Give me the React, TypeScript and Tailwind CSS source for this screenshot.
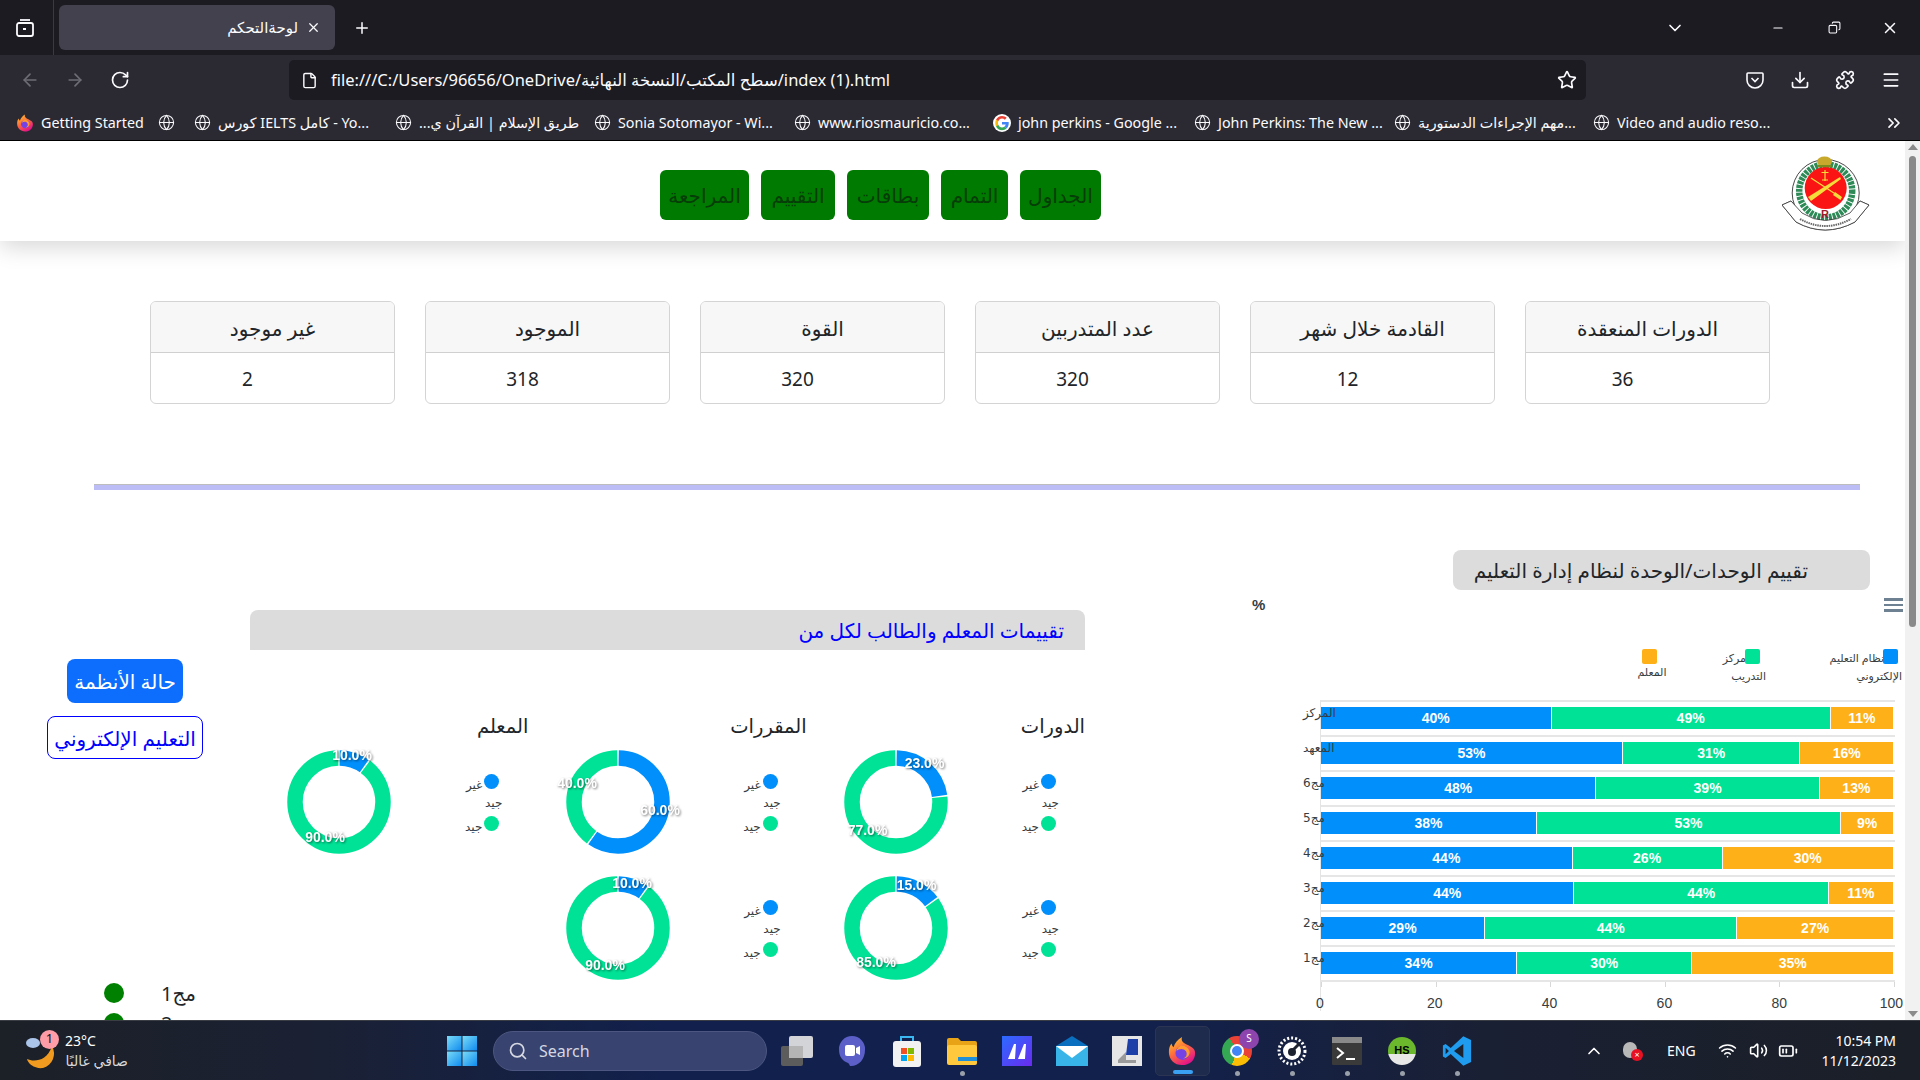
import React from "react";
import { ArrowLeft, ArrowRight, RotateCw, File, Star, Download, Puzzle, Menu, ChevronDown, Minus, Copy, X, Plus, ChevronsRight, Globe, Search, ChevronUp, Wifi, Volume2, BatteryMedium } from "lucide-react";

const B = "#008ffb", G = "#00e396", O = "#feb019";

function FirefoxIcon({ s = 18 }: { s?: number }) {
  return (
    <svg width={s} height={s} viewBox="0 0 32 32">
      <defs>
        <linearGradient id="ff" x1="0" y1="0" x2="0.6" y2="1"><stop offset="0" stopColor="#ffd52e" /><stop offset="0.5" stopColor="#ff7139" /><stop offset="1" stopColor="#e31587" /></linearGradient>
      </defs>
      <path d="M16 31C8 31 2 25 2 17c0-4 1-7 3-9 0 2 1 3 2 4 1-4 4-8 9-11-1 3 0 5 3 7 5 3 11 4 11 10 0 8-6 13-14 13z" fill="url(#ff)" />
      <circle cx="16.500" cy="18" r="7.500" fill="#7542e5" />
      <path d="M10 16c3-3 8-3 10 0 2 3 1 7-3 8 5 0 8-4 7-8-1-3-4-6-8-6-3 0-5 3-6 6z" fill="#ff9a2e" />
    </svg>
  );
}

function GoogleG() {
  return (
    <svg width="18" height="18" viewBox="0 0 48 48">
      <circle cx="24" cy="24" r="24" fill="#fff" />
      <path fill="#ea4335" d="M24 12c3 0 5.500 1 7.500 3l5-5C33 7 29 5 24 5 17 5 11 9 8 15l6 4.500C15.500 15 19.500 12 24 12z" />
      <path fill="#4285f4" d="M42 24.500c0-1.300-.1-2.500-.4-3.500H24v7h10c-.5 2.500-2 4.500-4 6l6 4.700c3.700-3.400 6-8.400 6-14.200z" />
      <path fill="#fbbc05" d="M14 28.500c-.5-1.300-.7-2.900-.7-4.500s.2-3.200.7-4.500L8 15c-1.300 2.700-2 5.800-2 9s.7 6.300 2 9z" />
      <path fill="#34a853" d="M24 43c5 0 9-1.600 12-4.300l-6-4.700c-1.600 1.100-3.600 1.800-6 1.800-4.500 0-8.500-3-10-7.300L8 33c3 6 9 10 16 10z" />
    </svg>
  );
}

const bookmarks: { icon: "ff" | "g" | "w"; text: string; cls: string; rtl?: boolean }[] = [
  { icon: "ff", text: "Getting Started", cls: "w-[142px]" },
  { icon: "w", text: "", cls: "w-[36px]" },
  { icon: "w", text: "كورس IELTS كامل - Yo...", cls: "w-[201px]" },
  { icon: "w", text: "طريق الإسلام | القرآن ي...", cls: "w-[199px]", rtl: true },
  { icon: "w", text: "Sonia Sotomayor - Wi...", cls: "w-[200px]" },
  { icon: "w", text: "www.riosmauricio.co...", cls: "w-[199px]" },
  { icon: "g", text: "john perkins - Google ...", cls: "w-[201px]" },
  { icon: "w", text: "John Perkins: The New ...", cls: "w-[200px]" },
  { icon: "w", text: "مهم الإجراءات الدستورية...", cls: "w-[199px]" },
  { icon: "w", text: "Video and audio reso...", cls: "w-[270px]" },
];

function BrowserChrome() {
  return (
    <div className="font-['Noto_Sans','DejaVu_Sans',sans-serif] text-[#fbfbfe]">
      <div className="flex h-[55px] items-center bg-[#1c1b22]">
        <div className="flex h-full w-[54px] items-center justify-center border-r border-[#3a3a42] pr-[4px]">
          <svg width="20" height="20" viewBox="0 0 20 20" fill="none" stroke="#fbfbfe" strokeWidth="1.800"><rect x="2" y="5" width="16" height="13" rx="2" /><path d="M5 2h10" /><rect x="8" y="10" width="3" height="2" fill="#fbfbfe" stroke="none" /></svg>
        </div>
        <div className="ml-[5px] flex h-[45px] w-[276px] items-center justify-end rounded-[6px] bg-[#42414d] pr-[14px]">
          <span dir="rtl" className="text-[15px]">لوحةالتحكم</span>
          <X size={15} className="ml-[8px]" />
        </div>
        <Plus size={18} className="ml-[18px]" />
        <ChevronDown size={20} className="ml-[1294px]" />
        <Minus size={14} className="ml-[86px]" />
        <Copy size={13} className="ml-[43px] -scale-x-100" />
        <X size={18} className="ml-[40px]" />
      </div>
      <div className="flex h-[50px] items-center bg-[#2b2a33]">
        <ArrowLeft size={20} className="ml-[20px] text-[#6e6d76]" />
        <ArrowRight size={20} className="ml-[25px] text-[#6e6d76]" />
        <RotateCw size={20} className="ml-[25px]" />
        <div className="ml-[159px] flex h-[40px] w-[1297px] items-center rounded-[5px] bg-[#1c1b22] pl-[12px]">
          <File size={17} />
          <span className="ml-[13px] text-[16.500px]">file:///C:/Users/96656/OneDrive/سطح المكتب/النسخة النهائية/index (1).html</span>
          <Star size={20} className="ml-auto mr-[9px]" />
        </div>
        <svg width="20" height="20" viewBox="0 0 20 20" fill="none" stroke="#fbfbfe" strokeWidth="1.600" className="ml-[159px]"><path d="M3 3h14a1 1 0 0 1 1 1v6a8 8 0 0 1-16 0V4a1 1 0 0 1 1-1z" /><path d="M6.500 8l3.500 3.500L13.500 8" /></svg>
        <Download size={20} className="ml-[25px]" />
        <Puzzle size={20} className="ml-[25px]" />
        <Menu size={20} className="ml-[26px]" />
      </div>
      <div className="flex h-[36px] items-center border-b border-black bg-[#2b2a33] pl-[16px] text-[14.300px]">
        {bookmarks.map((b, i) => (
          <div key={i} className={`flex shrink-0 items-center whitespace-nowrap ${b.cls}`}>
            {b.icon === "ff" ? <FirefoxIcon s={18} /> : b.icon === "g" ? <GoogleG /> : <Globe size={17} strokeWidth={1.500} />}
            {b.text && <span dir={b.rtl ? "rtl" : "ltr"} className="ml-[7px]">{b.text}</span>}
          </div>
        ))}
        <ChevronsRight size={20} className="ml-[21px]" />
      </div>
    </div>
  );
}

function Logo() {
  return (
    <svg width="90" height="78" viewBox="0 0 90 78">
      <path d="M0 49 L9 45 L20 57 Q43 72 68 57 L78 45 L87 49 L73 66 Q43 82 14 66 Z" fill="#fff" stroke="#333" strokeWidth="0.800" />
      <circle cx="43.700" cy="37" r="33.500" fill="#fff" stroke="#333" strokeWidth="0.900" />
      <circle cx="43.700" cy="35" r="26.500" fill="none" stroke="#2e8b57" strokeWidth="6.500" strokeDasharray="3 0.900" />
      <path d="M0 49 L9 45 L20 57 Q43 72 68 57 L78 45 L87 49 L73 66 Q43 82 14 66 Z" fill="#fff" stroke="#333" strokeWidth="0.800" />
      <path d="M18 63 Q43 77 69 63" fill="none" stroke="#666" strokeWidth="2" strokeDasharray="1.500 0.800" />
      <circle cx="43.700" cy="32" r="21" fill="#fb1414" />
      <path d="M26 41 L29 45 L59 23 L58 21 Z" fill="#f6dc3a" />
      <path d="M29 22 L58 41" stroke="#f6dc3a" strokeWidth="1.300" />
      <path d="M53 36 L60 41 L58.500 44 L51 39 Z" fill="#f6dc3a" />
      <path d="M43 14v11M39.500 16.500h7M40 24h6" stroke="#f6dc3a" strokeWidth="1.200" />
      <ellipse cx="42.500" cy="5.500" rx="7.500" ry="5" fill="#c9a92c" />
      <path d="M35.500 9h14v2.200h-14z" fill="#7d8a1c" />
      <text x="43" y="62" textAnchor="middle" fontSize="11" fontWeight="700" fontFamily="Liberation Sans, sans-serif" fill="#a21c2c">R</text>
    </svg>
  );
}

function Header() {
  const items = ["المراجعة", "التقييم", "بطاقات", "التمام", "الجداول"];
  const widths = ["w-[89px]", "w-[74px]", "w-[82px]", "w-[67px]", "w-[81px]"];
  return (
    <div className="relative z-10 flex h-[100px] items-center bg-white pl-[660px] shadow-[0_6px_22px_rgba(0,0,0,0.16)]">
      <div className="mt-[8px] flex gap-[12px]">
        {items.map((t, i) => (
          <div key={t} dir="rtl" className={`flex h-[50px] items-center justify-center rounded-[6px] bg-[#007a00] pt-[2px] text-[20px] text-[#063d08] ${widths[i]}`}>{t}</div>
        ))}
      </div>
      <div className="ml-[681px] mt-[8px]"><Logo /></div>
    </div>
  );
}

const stats = [
  ["الدورات المنعقدة", "36"],
  ["القادمة خلال شهر", "12"],
  ["عدد المتدربين", "320"],
  ["القوة", "320"],
  ["الموجود", "318"],
  ["غير موجود", "2"],
];

function Cards() {
  return (
    <div dir="rtl" className="mt-[60px] flex gap-[30px] pr-[135px]">
      {stats.map(([h, v]) => (
        <div key={h} className="flex h-[103px] w-[245px] flex-col overflow-hidden rounded-[6px] border border-[#d4d4d4] text-[#212529]">
          <div className="flex h-[51px] items-center justify-center border-b border-[#d0d0d0] bg-[#f7f7f7] pt-[3px] text-[20px]">{h}</div>
          <div className="flex flex-1 items-center justify-center pr-[50px] pt-[3px] text-[19px]">{v}</div>
        </div>
      ))}
    </div>
  );
}

function Donut({ p, l1, l2 }: { p: number; l1: [number, number]; l2: [number, number] }) {
  return (
    <svg width="104" height="104" viewBox="-52 -52 104 104" className="shrink-0 overflow-visible">
      <g transform="rotate(-90)">
        <circle r="44" fill="none" stroke={B} strokeWidth="15.500" pathLength={100} strokeDasharray={`${p - 0.5} ${100.5 - p}`} strokeDashoffset={-0.25} />
        <circle r="44" fill="none" stroke={G} strokeWidth="15.500" pathLength={100} strokeDasharray={`${99.5 - p} ${p + 0.5}`} strokeDashoffset={-(p + 0.25)} />
      </g>
      <g fontFamily="Liberation Sans, sans-serif" fontWeight="700" fontSize="14" fill="#fff" textAnchor="middle" direction="ltr" className="[filter:drop-shadow(1px_1px_1px_rgba(0,0,0,0.5))]">
        <text x={l1[0]} y={l1[1] + 5}>{p.toFixed(1)}%</text>
        <text x={l2[0]} y={l2[1] + 5}>{(100 - p).toFixed(1)}%</text>
      </g>
    </svg>
  );
}

function DonutRow(props: { p: number; l1: [number, number]; l2: [number, number] }) {
  return (
    <div className="flex h-[126px] items-center">
      <div className="flex w-[137px] shrink-0 flex-col text-[12px] leading-[21px] text-[#373d3f]">
        <div className="flex h-[21px] items-center pr-[29px]">
          <span className="h-[15px] w-[15px] rounded-full bg-[#008ffb]" />
          <span className="mr-[2px] mt-[6px]">غير</span>
        </div>
        <div className="h-[21px] pr-[26px]">جيد</div>
        <div className="flex h-[21px] items-center pr-[29px]">
          <span className="h-[15px] w-[15px] rounded-full bg-[#00e396]" />
          <span className="mr-[2px] mt-[6px]">جيد</span>
        </div>
      </div>
      <Donut {...props} />
    </div>
  );
}

function DonutCol({ title, rows }: { title: string; rows: { p: number; l1: [number, number]; l2: [number, number] }[] }) {
  return (
    <div className="w-[278.300px]">
      <div className="flex h-[89px] items-end">
        <div className="mb-[-3px] h-[32px] text-[19.500px] leading-[32px] text-[#212529]">{title}</div>
      </div>
      {rows.map((r, i) => <DonutRow key={i} {...r} />)}
    </div>
  );
}

function DonutPanel() {
  return (
    <div className="w-[835px] shrink-0 pt-[60px]" dir="rtl">
      <div className="flex h-[40px] items-center rounded-t-[8px] bg-[#dcdcdc] pr-[21px] pt-[2px] text-[20px] text-[#0000ff]">تقييمات المعلم والطالب لكل من</div>
      <div className="flex">
        <DonutCol title="الدورات" rows={[{ p: 23, l1: [28.500, -39], l2: [-28.500, 28] }, { p: 15, l1: [20.500, -43], l2: [-20, 34] }]} />
        <DonutCol title="المقررات" rows={[{ p: 60, l1: [42, 8], l2: [-41, -19] }, { p: 10, l1: [14, -45], l2: [-13, 37] }]} />
        <DonutCol title="المعلم" rows={[{ p: 10, l1: [13, -47], l2: [-14, 35] }]} />
      </div>
    </div>
  );
}

const bars: { name: string; v: [number, number, number]; t: [number, number, number] }[] = [
  { name: "المركز", v: [501, 607, 136], t: [40, 49, 11] },
  { name: "المعهد", v: [657, 385, 202], t: [53, 31, 16] },
  { name: "مج6", v: [599, 485, 160], t: [48, 39, 13] },
  { name: "مج5", v: [469, 662, 113], t: [38, 53, 9] },
  { name: "مج4", v: [547, 325, 372], t: [44, 26, 30] },
  { name: "مج3", v: [551, 553, 140], t: [44, 44, 11] },
  { name: "مج2", v: [356, 548, 340], t: [29, 44, 27] },
  { name: "مج1", v: [426, 380, 438], t: [34, 30, 35] },
];

function BarChart() {
  const cols = [B, G, O];
  return (
    <div className="w-[820px] shrink-0">
      <div dir="rtl" className="ml-[368px] flex h-[40px] w-[417px] items-center rounded-[8px] bg-[#dcdcdc] pr-[62px] pt-[2px] text-[20px] text-[#212529]">تقييم الوحدات/الوحدة لنظام إدارة التعليم</div>
      <div className="flex h-[30px] items-center justify-between pl-[167px] pr-[2px]">
        <span className="font-['Liberation_Sans',sans-serif] text-[15px] font-bold text-[#373d3f]">%</span>
        <div className="flex w-[19px] flex-col gap-[3px]">
          <span className="h-[2.500px] bg-[#6e8192]" /><span className="h-[2.500px] bg-[#6e8192]" /><span className="h-[2.500px] bg-[#6e8192]" />
        </div>
      </div>
      <div dir="ltr" className="mt-[29px] flex h-[51px] text-[11px] text-[#373d3f]">
        <div dir="rtl" className="ml-[537px] flex w-[60px] flex-col items-center">
          <span className="ml-[-5px] h-[15px] w-[15px] rounded-[2px] bg-[#feb019]" />
          <span className="leading-[16px]">المعلم</span>
        </div>
        <div dir="rtl" className="ml-[37px] w-[60px]">
          <div className="flex h-[18px] items-start pr-[19px]">
            <span className="h-[15px] w-[15px] shrink-0 rounded-[2px] bg-[#00e396]" />
            <span className="mr-[-1px] leading-[18px]">مركز</span>
          </div>
          <div className="pr-[13px] leading-[18px]">التدريب</div>
        </div>
        <div dir="rtl" className="ml-[50px] w-[73px]">
          <div className="flex h-[18px] items-start whitespace-nowrap pr-[4px]">
            <span className="h-[15px] w-[15px] shrink-0 rounded-[2px] bg-[#008ffb]" />
            <span className="mr-[-1px] leading-[18px]">نظام التعليم</span>
          </div>
          <div className="leading-[18px]">الإلكتروني</div>
        </div>
      </div>
      <div className="ml-[235px] w-[575px] border-l border-[#e4e4e4] font-['Liberation_Sans',sans-serif]">
        {bars.map((r) => (
          <div key={r.name} className="relative h-[35px] border-t-2 border-[#e6e6e6] pt-[5px]">
            <div className="flex h-[22px] w-[572px]">
              {r.v.map((w, i) => (
                <div key={i} style={{ flexGrow: w, backgroundColor: cols[i] }} className="flex basis-0 items-center justify-center border-r border-white text-[14px] font-bold text-white last:border-r-0">{r.t[i]}%</div>
              ))}
            </div>
            <span dir="rtl" className="absolute -left-[18px] top-[3px] font-['DejaVu_Sans',sans-serif] text-[12px] leading-[16px] text-[#373d3f]">{r.name}</span>
          </div>
        ))}
        <div className="flex h-[7px] justify-between border-t-2 border-[#e6e6e6]">
          {[0, 1, 2, 3, 4, 5].map((i) => <span key={i} className="h-[5px] w-px bg-[#d8d8d8]" />)}
        </div>
        <div className="mt-[8px] flex justify-between text-[14px] leading-[16px] text-[#373d3f]">
          {[0, 20, 40, 60, 80].map((n) => <span key={n} className="flex w-0 -translate-x-[1px] justify-center">{n}</span>)}
          <span className="flex w-0 translate-x-[8px] justify-end">100</span>
        </div>
      </div>
    </div>
  );
}

function LeftCol() {
  return (
    <div className="flex w-[250px] shrink-0 flex-col pt-[109px]">
      <div dir="rtl" className="ml-[67px] flex h-[44px] w-[116px] items-center justify-center rounded-[8px] bg-[#0d6efd] pt-[2px] text-[20px] text-white">حالة الأنظمة</div>
      <div dir="rtl" className="ml-[47px] mt-[13px] flex h-[43px] w-[156px] items-center justify-center rounded-[8px] border border-[#0000ff] pt-[2px] text-[20px] text-[#0000ff]">التعليم الإلكتروني</div>
      <div className="mt-[219px] pl-[104px]">
        {["مج1", "مج2"].map((t) => (
          <div key={t} className="flex h-[30px] items-center">
            <span className="h-[20px] w-[20px] rounded-full bg-[#008000]" />
            <span dir="rtl" className="ml-[37px] pt-[2px] text-[20px] text-[#212529]">{t}</span>
          </div>
        ))}
      </div>
    </div>
  );
}

function Scrollbar() {
  return (
    <div className="flex w-[15px] shrink-0 flex-col items-center bg-[#f1f1f1]">
      <span className="mt-[3px] h-0 w-0 border-x-[5px] border-b-[6px] border-x-transparent border-b-[#8a8a8a]" />
      <span className="mt-[6px] h-[471px] w-[7px] rounded-full bg-[#8a8a8a]" />
      <span className="mb-[3px] mt-auto h-0 w-0 border-x-[5px] border-t-[6px] border-x-transparent border-t-[#8a8a8a]" />
    </div>
  );
}

const task: { n: string; el: React.ReactNode; dot?: boolean; on?: boolean }[] = [
  { n: "view", el: (
    <svg width="32" height="30" viewBox="0 0 32 30"><rect x="0" y="10" width="22" height="20" rx="2" fill="#5c5c5c" /><rect x="8" y="0" width="24" height="22" rx="2" fill="#e8e8e8" opacity="0.9" /><rect x="8" y="10" width="14" height="12" fill="#b5b5b5" /></svg>
  ) },
  { n: "meet", el: (
    <svg width="28" height="32" viewBox="0 0 28 32"><path d="M14 1a13 13 0 0 1 13 14c0 9-6 16-14 16-2 0-1-2-3-3C4 26 1 21 1 15A13 13 0 0 1 14 1z" fill="#5b5fc7" /><rect x="7" y="10" width="10" height="11" rx="2" fill="#fff" /><path d="M18 13l4-2v9l-4-2z" fill="#fff" /></svg>
  ) },
  { n: "store", el: (
    <svg width="30" height="32" viewBox="0 0 30 32"><path d="M9 6V2h12v4" fill="none" stroke="#3ab7f0" strokeWidth="2" /><rect x="1" y="6" width="28" height="26" rx="3" fill="#f2f2f2" /><rect x="9" y="13" width="6" height="6" fill="#f25022" /><rect x="16" y="13" width="6" height="6" fill="#7fba00" /><rect x="9" y="20" width="6" height="6" fill="#00a4ef" /><rect x="16" y="20" width="6" height="6" fill="#ffb900" /></svg>
  ) },
  { n: "files", dot: true, el: (
    <svg width="30" height="28" viewBox="0 0 30 28"><path d="M0 3a2 2 0 0 1 2-2h9l3 3h14a2 2 0 0 1 2 2v4H0z" fill="#e8a317" /><rect x="0" y="8" width="30" height="20" rx="2" fill="#ffc83d" /><rect x="11" y="20" width="19" height="4" fill="#1e8fd8" /></svg>
  ) },
  { n: "wiz", el: (
    <svg width="30" height="30" viewBox="0 0 30 30"><defs><linearGradient id="wz" x1="0" y1="0" x2="1" y2="1"><stop offset="0" stopColor="#2b6bff" /><stop offset="1" stopColor="#6a2bf0" /></linearGradient></defs><rect width="30" height="30" fill="url(#wz)" /><path d="M6 23l6-15h2l-1 15zM16 23l6-15h2l-1 15z" fill="#fff" /></svg>
  ) },
  { n: "mail", el: (
    <svg width="32" height="30" viewBox="0 0 32 30"><path d="M16 0l16 10v20H0V10z" fill="#0a6fbe" /><rect y="10" width="32" height="20" fill="#39b4e8" /><path d="M0 10h32L16 22z" fill="#fff" /></svg>
  ) },
  { n: "app", el: (
    <svg width="30" height="30" viewBox="0 0 30 30"><rect width="30" height="30" fill="#e6e6e6" /><path d="M16 3h10v16H14z" fill="#1c3fa8" /><path d="M6 24l8-8v8h10v3H6z" fill="#9a9a9a" /></svg>
  ) },
  { n: "ff", on: true, el: <FirefoxIcon s={30} /> },
  { n: "chrome", dot: true, el: (
    <div className="relative h-[30px] w-[30px]">
      <div className="h-[30px] w-[30px] rounded-full bg-[conic-gradient(#ea4335_0deg_120deg,#fbbc05_120deg_200deg,#34a853_200deg_330deg,#ea4335_330deg)]" />
      <div className="absolute left-[8px] top-[8px] h-[14px] w-[14px] rounded-full border-2 border-white bg-[#4285f4]" />
      <div className="absolute -right-[7px] -top-[7px] flex h-[20px] w-[20px] items-center justify-center rounded-full bg-[#8e44ad] text-[10px] text-white">S</div>
    </div>
  ) },
  { n: "gauge", dot: true, el: (
    <svg width="30" height="30" viewBox="0 0 30 30"><circle cx="15" cy="15" r="13" fill="none" stroke="#fff" strokeWidth="3" strokeDasharray="2 2" /><circle cx="15" cy="15" r="9" fill="#fff" /><path d="M15 15l8-8" stroke="#1c2230" strokeWidth="3" /><circle cx="15" cy="16" r="4" fill="#1c2230" /></svg>
  ) },
  { n: "term", dot: true, el: (
    <svg width="30" height="28" viewBox="0 0 30 28"><rect width="30" height="28" rx="1" fill="#3a3a3a" /><rect width="30" height="6" fill="#8a8a8a" /><path d="M5 11l6 5-6 5" fill="none" stroke="#fff" strokeWidth="2" /><path d="M14 22h9" stroke="#fff" strokeWidth="2" /></svg>
  ) },
  { n: "hs", dot: true, el: (
    <div className="flex h-[28px] w-[28px] items-center justify-center rounded-full bg-[linear-gradient(#6bb82c_0%,#6bb82c_60%,#e8e8e8_60%)] font-['Liberation_Sans',sans-serif] text-[11px] font-bold text-black">HS</div>
  ) },
  { n: "code", dot: true, el: (
    <svg width="30" height="30" viewBox="0 0 100 100"><path d="M71 99l26-12V13L71 1 29 40 12 27 3 32v36l9 5 17-13z" fill="#1f9cf0" /><path d="M71 27L40 50l31 23z" fill="#1c2230" /><path d="M12 39v22l11-11z" fill="#1c2230" /></svg>
  ) },
];

function Taskbar() {
  return (
    <div className="flex h-[60px] shrink-0 items-center border-t border-[#3a3d44] bg-[linear-gradient(90deg,#1c2027_0%,#1b2133_16%,#11204d_35%,#12204c_60%,#1a2033_78%,#1b1f27_100%)] font-['Noto_Sans','DejaVu_Sans',sans-serif] text-white">
      <div className="relative ml-[25px] h-[36px] w-[30px] shrink-0">
        <svg width="30" height="36" viewBox="0 0 30 36"><path d="M27 13a15 15 0 0 1-9 22C10 36 3 31 2 26c6 3 20 3 25-13z" fill="#f09a1f" /><ellipse cx="8" cy="10" rx="7" ry="5" fill="#aac4ea" /></svg>
        <span className="absolute left-[15px] top-[-3px] flex h-[19px] w-[19px] items-center justify-center rounded-full bg-[#ff9ca8] text-[13px] text-[#111]">1</span>
      </div>
      <div className="ml-[10px] w-[382px] shrink-0">
        <div className="text-[14px] leading-[20px]">23°C</div>
        <div dir="rtl" className="w-[63px] whitespace-nowrap text-[14px] leading-[20px] text-[#d8d8d8]">صافي غالبًا</div>
      </div>
      <svg width="30" height="30" viewBox="0 0 30 30" className="shrink-0"><defs><linearGradient id="w1" x1="0" y1="0" x2="1" y2="1"><stop offset="0" stopColor="#7adcf8" /><stop offset="1" stopColor="#0f8bef" /></linearGradient></defs><rect width="14.500" height="14.500" fill="url(#w1)" /><rect x="15.500" width="14.500" height="14.500" fill="url(#w1)" /><rect y="15.500" width="14.500" height="14.500" fill="url(#w1)" /><rect x="15.500" y="15.500" width="14.500" height="14.500" fill="url(#w1)" /></svg>
      <div className="ml-[16px] flex h-[40px] w-[274px] shrink-0 items-center rounded-full border border-[#4c5680] bg-[#38436f] pl-[14px] text-[16px] text-[#d5d8e2]">
        <Search size={20} />
        <span className="ml-[11px]">Search</span>
      </div>
      <div className="ml-[2.500px] flex shrink-0">
        {task.map((t) => (
          <div key={t.n} className={`relative flex h-[50px] w-[55px] items-center justify-center rounded-[5px] ${t.on ? "border border-[#2b3553] bg-[#1f2b4d]" : ""}`}>
            {t.el}
            {t.dot && <span className="absolute bottom-[0px] left-[25px] h-[5px] w-[5px] rounded-full bg-[#9aa0aa]" />}
            {t.on && <span className="absolute bottom-[1px] left-[17px] h-[4px] w-[20px] rounded-full bg-[#3aa0f2]" />}
          </div>
        ))}
      </div>
      <ChevronUp size={20} className="ml-[99.500px] shrink-0" />
      <div className="relative ml-[19px] h-[20px] w-[20px] shrink-0">
        <span className="absolute left-0 top-[1px] h-[16px] w-[14px] rounded-full bg-[#b8b8b8]" />
        <span className="absolute left-[8px] top-[8px] flex h-[12px] w-[12px] items-center justify-center rounded-full bg-[#e81123] text-[9px] leading-none">×</span>
      </div>
      <span className="ml-[24px] w-[31px] shrink-0 text-[14px]">ENG</span>
      <Wifi size={19} className="ml-[20px] shrink-0" />
      <Volume2 size={19} className="ml-[12px] shrink-0" />
      <BatteryMedium size={20} className="ml-[10px] shrink-0" />
      <div className="ml-[10px] w-[88px] shrink-0 text-right text-[14px] leading-[20px]">
        <div>10:54 PM</div>
        <div>11/12/2023</div>
      </div>
    </div>
  );
}

export default function App() {
  return (
    <div className="flex h-[1080px] w-[1920px] flex-col overflow-hidden bg-white font-['Noto_Sans','DejaVu_Sans',sans-serif]">
      <BrowserChrome />
      <div className="flex min-h-0 flex-1">
        <div className="min-w-0 flex-1 overflow-hidden bg-white">
          <Header />
          <Cards />
          <div className="ml-[94px] mt-[80px] h-[6px] w-[1766px] border-t border-[#bdbdbd] bg-[#bcbcf6]" />
          <div className="mt-[60px] flex">
            <LeftCol />
            <DonutPanel />
            <BarChart />
          </div>
        </div>
        <Scrollbar />
      </div>
      <Taskbar />
    </div>
  );
}
